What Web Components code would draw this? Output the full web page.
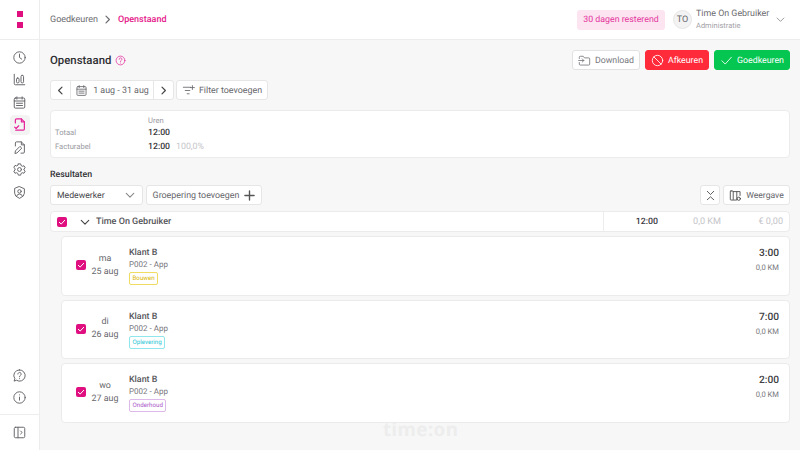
<!DOCTYPE html>
<html lang="nl">
<head>
<meta charset="utf-8">
<title>Openstaand</title>
<style>
  html, body { margin: 0; height: 450px; overflow: hidden; }
  body { font-family: Roboto, "Noto Sans", sans-serif; color: #4b4b50; background: #f7f7f7; text-rendering: geometricPrecision; white-space: nowrap; }
</style>
</head>
<body>
<app-shell>
  <side-nav slot="nav"></side-nav>
  <top-bar slot="top"></top-bar>
  <page-head></page-head>
  <date-bar></date-bar>
  <summary-card></summary-card>
  <results-bar></results-bar>
  <group-row></group-row>
  <entry-card day="ma" date="25 aug" time="3:00" tag="Bouwen" color="#f0dc60" text="#d9b400"></entry-card>
  <entry-card day="di" date="26 aug" time="7:00" tag="Oplevering" color="#8fe6ec" text="#22c5d4"></entry-card>
  <entry-card day="wo" date="27 aug" time="2:00" tag="Onderhoud" color="#dcb9e8" text="#a956c9"></entry-card>
  <div slot="mark">time:on</div>
</app-shell>

<script>
const ICON = 'fill="none" stroke="currentColor" stroke-width="1.3" stroke-linecap="round" stroke-linejoin="round"';

const icons = {
  clock: `<svg width="20" height="20" viewBox="0 0 20 20" ${ICON}><circle cx="10" cy="10" r="7.6"/><path d="M10 5.5V10l3 2.2"/></svg>`,
  chart: `<svg width="20" height="20" viewBox="0 0 20 20" ${ICON}><path d="M3 3v12.5q0 1.500 1.500 1.500H17"/><rect x="6" y="8" width="3.400" height="6.500" rx="1.500"/><rect x="12" y="4.500" width="3.400" height="10" rx="1.500"/></svg>`,
  calendar: `<svg width="20" height="20" viewBox="0 0 20 20" ${ICON}><rect x="3" y="4" width="14" height="13.500" rx="1.500"/><path d="M3 8h14M6.500 2.500v3M13.500 2.500v3M6 11h8M6 14h8"/></svg>`,
  approve: `<svg width="20" height="20" viewBox="0 0 20 20" fill="none" stroke="currentColor" stroke-width="1.600" stroke-linecap="round" stroke-linejoin="round"><path d="M4.500 8V4q0-1.500 1.500-1.500h6.500L16.500 6.500V16q0 1.500-1.500 1.500H5"/><path d="M12.500 2.500v4h4"/><path d="M3.500 13.500l2 1.800 3.500-3.600"/></svg>`,
  edit: `<svg width="20" height="20" viewBox="0 0 20 20" ${ICON}><path d="M4.500 8V4q0-1.500 1.500-1.500h6.500L16.500 6.500V16q0 1.500-1.500 1.500h-3"/><path d="M12.500 2.500v4h4"/><path d="M4 17.500l.6-3 6-6 2.400 2.400-6 6z"/></svg>`,
  gear: `<svg width="20" height="20" viewBox="0 0 20 20" ${ICON}><path d="M8.400 2.500h3.200l.5 2.200 1.700 1 2.200-.7 1.600 2.800-1.700 1.500v1.400l1.700 1.500-1.600 2.800-2.200-.7-1.700 1-.5 2.200H8.400l-.5-2.200-1.700-1-2.200.7-1.600-2.800 1.700-1.500V8.800L2.400 7.300 4 4.500l2.200.7 1.700-1z"/><circle cx="10" cy="10" r="2.600"/></svg>`,
  shield: `<svg width="20" height="20" viewBox="0 0 20 20" ${ICON}><path d="M10 2.200l6.500 2.800v6q0 4.300-6.500 6.800-6.500-2.500-6.500-6.800V5z"/><circle cx="10" cy="8.500" r="2.300"/><path d="M6 15q.8-3 4-3t4 3"/></svg>`,
  help: `<svg width="20" height="20" viewBox="0 0 20 20" ${ICON}><path d="M10 2.500a7.500 7.500 0 1 1-4 13.800L2.800 17.500l1-3.200A7.500 7.500 0 0 1 10 2.500z"/><path d="M7.800 8a2.200 2.200 0 1 1 3.400 1.900c-.8.500-1.200 1-1.200 1.800"/><path d="M10 14.200v.1"/></svg>`,
  info: `<svg width="20" height="20" viewBox="0 0 20 20" ${ICON}><circle cx="10" cy="10" r="7.600"/><path d="M10 9.500v4M10 6.500v.1"/></svg>`,
  panel: `<svg width="20" height="20" viewBox="0 0 20 20" ${ICON}><rect x="3" y="3" width="14" height="14" rx="1.800"/><path d="M8 3v14M11.500 8l2 2-2 2"/></svg>`,
  down: `<svg width="12" height="12" viewBox="0 0 12 12" ${ICON}><path d="M1.500 4l4.500 4.500L10.500 4"/></svg>`,
  left: `<svg width="12" height="12" viewBox="0 0 12 12" fill="none" stroke="currentColor" stroke-width="1.600" stroke-linecap="round" stroke-linejoin="round"><path d="M8 1.500L3.500 6 8 10.500"/></svg>`,
  right: `<svg width="12" height="12" viewBox="0 0 12 12" fill="none" stroke="currentColor" stroke-width="1.600" stroke-linecap="round" stroke-linejoin="round"><path d="M4 1.500L8.500 6 4 10.500"/></svg>`,
  check: `<svg width="11" height="11" viewBox="0 0 12 12" fill="none" stroke="#fff" stroke-width="1.500" stroke-linecap="round" stroke-linejoin="round"><path d="M2 6.500l2.800 2.600L10 3.500"/></svg>`
};

// all plain elements share this: template string goes in the shadow root
class BaseEl extends HTMLElement {
  constructor() {
    super();
    this.attachShadow({ mode: "open" });
  }
  connectedCallback() {
    this.shadowRoot.innerHTML = `<style>${this.css()}</style>${this.html()}`;
  }
  css() { return ""; }
  html() { return ""; }
}

class AppShell extends BaseEl {
  css() { return `
    :host { display: grid; grid-template-columns: 40px 1fr; grid-template-rows: 40px 1fr; width: 800px; height: 450px; position: relative; overflow: hidden; }
    ::slotted([slot=nav]) { grid-row: 1 / 3; }
    main { padding: 10px 10px 0 10px; display: flex; flex-direction: column; min-width: 0; }
    .wm { position: absolute; left: 383px; top: 416px; font: 700 18.800px "Noto Sans", sans-serif; letter-spacing: .4px; color: #ededed; }
  `; }
  html() { return `<slot name="nav"></slot><slot name="top"></slot>
    <main><slot></slot></main>
    <div class="wm"><slot name="mark"></slot></div>`; }
}

class SideNav extends BaseEl {
  css() { return `
    :host { display: flex; flex-direction: column; background: #fff; border-right: 1px solid #ededed; box-sizing: border-box; width: 40px; color: #66666b; }
    .logo { height: 40px; box-sizing: border-box; border-bottom: 1px solid #ededed; display: flex; flex-direction: column; align-items: center; justify-content: center; gap: 5px; flex: none; }
    .logo i { width: 6px; height: 6px; background: #df0f80; display: block; }
    .list { display: flex; flex-direction: column; align-items: center; gap: 2.500px; padding-top: 7px; flex: 1; }
    .it { width: 20px; height: 20px; padding: 0; display: flex; align-items: center; justify-content: center; border-radius: 4px; }
    .it svg { width: 15px; height: 15px; flex: none; }
    .on { background: #f3f3f3; color: #e5249a; width: 20px; }
    .sp { flex: 1; }
    .foot { height: 35px; flex: none; border-top: 1px solid #ededed; display: flex; align-items: center; justify-content: center; }
    .foot svg { width: 15px; height: 15px; }
    .low { padding-bottom: 4px; }
  `; }
  html() {
    const it = (n, c = "") => `<span class="it ${c}">${icons[n]}</span>`;
    return `<div class="logo"><i></i><i></i></div>
    <div class="list">${it("clock")}${it("chart")}${it("calendar")}${it("approve", "on")}${it("edit")}${it("gear")}${it("shield")}
      <span class="sp"></span>${it("help")}${it("info")}<span class="low"></span></div>
    <div class="foot">${icons.panel}</div>`;
  }
}

class TopBar extends BaseEl {
  css() { return `
    :host { display: flex; align-items: center; background: #fff; border-bottom: 1px solid #ededed; box-sizing: border-box; height: 40px; padding: 0 15px 0 10px; font-size: 9px; }
    .crumb { color: #6b6b70; padding-top: 1px; }
    .sep { margin: 0 6px 0 5px; display: flex; color: #6b6b70; }
    .sep svg { width: 9px; height: 9px; }
    .cur { color: #e5188a; font-weight: 500; font-size: 9px; padding-top: 1px; }
    .sp { flex: 1; }
    .days { background: #fce4f1; color: #e5359d; border-radius: 3px; height: 20px; line-height: 20px; font-size: 8.800px; width: 88px; text-align: center; margin-right: 8px; }
    .av { width: 19px; height: 19px; border-radius: 50%; background: #f3f3f3; border: 1px solid #e6e6e6; display: flex; align-items: center; justify-content: center; color: #66666b; font-size: 9px; margin-right: 4px; box-sizing: border-box; }
    .who { line-height: 11px; width: 80px; }
    .n { color: #6b6b70; font-size: 8.900px; }
    .r { color: #a3a3a8; font-size: 7.500px; }
    .ch { color: #999; display: flex; }
    .ch svg { width: 9px; height: 9px; }
  `; }
  html() { return `<span class="crumb">Goedkeuren</span><span class="sep">${icons.right}</span><span class="cur">Openstaand</span><span class="sp"></span>
    <span class="days">30 dagen resterend</span><span class="av">TO</span>
    <span class="who"><div class="n">Time On Gebruiker</div><div class="r">Administratie</div></span><span class="ch">${icons.down}</span>`; }
}

class PageHead extends BaseEl {
  css() { return `
    :host { display: flex; align-items: center; height: 20px; font-size: 8.800px; }
    h1 { margin: 0 4px 0 0; font-size: 11.400px; font-weight: 500; color: #2f2f33; }
    .q { color: #e5249a; display: flex; }
    .q svg { width: 11px; height: 11px; }
    .sp { flex: 1; }
    button { font: inherit; height: 20px; border-radius: 3px; border: 1px solid; display: flex; align-items: center; padding: 0; margin-left: 5px; justify-content: center; gap: 4px; box-sizing: border-box; text-rendering: inherit; }
    button span { padding-top: 1px; }
    .dl { width: 68px; background: #fff; border-color: #e2e2e2; color: #77777c; }
    .no { width: 64px; background: #ff2a3a; border-color: #ff2a3a; color: #fff; }
    .ok { width: 76px; background: #04c651; border-color: #04c651; color: #fff; }
    button svg { width: 13px; height: 13px; }
  `; }
  html() { return `<h1>Openstaand</h1><span class="q"><svg viewBox="0 0 20 20" ${ICON} stroke-width="1.800"><circle cx="10" cy="10" r="8"/><path d="M7.500 7.800a2.500 2.500 0 1 1 3.700 2.200c-.8.500-1.200 1-1.200 1.800M10 14.600v.1"/></svg></span><span class="sp"></span>
    <button class="dl"><svg viewBox="0 0 20 20" ${ICON}><path d="M2 7V5q0-1.500 1.500-1.500H8l2 2.500h6.500Q18 6 18 7.500v8q0 1.500-1.500 1.500h-13Q2 17 2 15.500V13"/><path d="M1 10h8M6.500 7.500L9 10l-2.500 2.500"/></svg><span>Download</span></button>
    <button class="no"><svg viewBox="0 0 20 20" ${ICON}><circle cx="10" cy="10" r="8"/><path d="M4.300 4.300l11.400 11.400"/></svg><span>Afkeuren</span></button>
    <button class="ok"><svg viewBox="0 0 20 20" ${ICON} stroke-width="1.600"><path d="M3 10.500l5 5L17.500 5"/></svg><span>Goedkeuren</span></button>`; }
}

class DateBar extends BaseEl {
  css() { return `
    :host { display: flex; margin-top: 10px; gap: 2px; font-size: 8.900px; color: #66666b; }
    .g, .f { height: 20px; background: #fff; border: 1px solid #e6e6e6; border-radius: 3px; box-sizing: border-box; display: flex; align-items: center; }
    .g { width: 124px; }
    .a { width: 19px; display: flex; justify-content: center; color: #444; flex: none; }
    .a svg { width: 9px; height: 9px; }
    .m { flex: 1; border-left: 1px solid #e6e6e6; border-right: 1px solid #e6e6e6; height: 100%; display: flex; align-items: center; justify-content: center; gap: 5px; }
    .m svg, .f svg { width: 13px; height: 13px; }
    .f { width: 92px; justify-content: center; gap: 4px; }
    .t { padding-top: 1px; }
  `; }
  html() { return `<div class="g"><span class="a">${icons.left}</span><span class="m">${icons.calendar}<span class="t">1 aug - 31 aug</span></span><span class="a">${icons.right}</span></div>
    <div class="f"><svg viewBox="0 0 20 20" ${ICON}><path d="M2 5h11M5 10h7M8 15h3M16 2.500v6M13 5.500h6"/></svg><span class="t">Filter toevoegen</span></div>`; }
}

class SummaryCard extends BaseEl {
  css() { return `
    :host { display: grid; grid-template-columns: 93px 28px auto 1fr; grid-template-rows: 11px 13px 15px; align-items: center; margin-top: 10px; height: 48px; box-sizing: border-box; padding: 4px 4px; background: #fff; border: 1px solid #ebebeb; border-radius: 4px; font-size: 7.600px; color: #9a9a9f; }
    .v { font-size: 8.700px; color: #38383c; font-weight: 500; }
    .p { font-size: 8.800px; color: #c6c6ca; }
    .h { font-size: 7.600px; grid-column: 2 / 5; }
  `; }
  html() { return `<span></span><span class="h">Uren</span>
    <span>Totaal</span><span class="v">12:00</span><span></span><span></span>
    <span>Facturabel</span><span class="v">12:00</span><span class="p">100,0%</span><span></span>`; }
}

class ResultsBar extends BaseEl {
  css() { return `
    :host { display: block; margin-top: 10px; font-size: 8.900px; color: #66666b; }
    h2 { margin: 0; font-size: 8.800px; font-weight: 500; color: #2f2f33; line-height: 13px; padding-top: 1px; }
    .r { display: flex; gap: 3px; margin-top: 3px; }
    .b { height: 20px; background: #fff; border: 1px solid #e6e6e6; border-radius: 3px; box-sizing: border-box; display: flex; align-items: center; }
    .b span { padding-top: 1px; }
    .sel { width: 93px; justify-content: space-between; padding: 0 7px 0 6px; color: #46464a; font-size: 8.700px; }
    .sel svg { width: 10px; height: 10px; color: #888; }
    .add { width: 116px; justify-content: center; gap: 5px; }
    .add svg { width: 11px; height: 11px; color: #555; }
    .sp { flex: 1; }
    .x { width: 20px; justify-content: center; color: #444; }
    .x svg { width: 13px; height: 13px; }
    .w { width: 67px; justify-content: center; gap: 4px; font-size: 8.600px; }
    .w svg { width: 13px; height: 13px; color: #444; }
  `; }
  html() { return `<h2>Resultaten</h2><div class="r">
    <div class="b sel"><span>Medewerker</span>${icons.down}</div>
    <div class="b add"><span>Groepering toevoegen</span><svg viewBox="0 0 12 12" fill="none" stroke="currentColor" stroke-width="1.500" stroke-linecap="round"><path d="M6 1v10M1 6h10"/></svg></div>
    <span class="sp"></span>
    <div class="b x"><svg viewBox="0 0 20 20" ${ICON} stroke-width="1.600"><path d="M5 3.500l5 5 5-5M5 16.500l5-4.500 5 4.500"/></svg></div>
    <div class="b w"><svg viewBox="0 0 20 20" ${ICON}><rect x="2" y="3" width="4.500" height="14" rx="1"/><path d="M6.500 4h5.500v13H6.500M12 4h5v6"/><circle cx="15" cy="15" r="2.500"/></svg><span>Weergave</span></div>
  </div>`; }
}

class CheckBox extends BaseEl {
  css() { return `
    :host { display: flex; align-items: center; justify-content: center; width: 10px; height: 10px; background: #df0f80; border-radius: 2px; flex: none; }
    svg { width: 8px; height: 8px; }
  `; }
  html() { return icons.check; }
}

class GroupRow extends BaseEl {
  css() { return `
    :host { display: flex; align-items: center; margin-top: 6px; height: 21px; background: #fff; border: 1px solid #ebebeb; border-radius: 4px; box-sizing: border-box; font-size: 9px; color: #55555a; padding-left: 6px; }
    .c { display: flex; margin-left: 13px; margin-right: 6px; color: #444; }
    .c svg { width: 10px; height: 10px; }
    .n { flex: 1; font-weight: 500; }
    .t { border-left: 1px solid #ededed; width: 186px; height: 100%; box-sizing: border-box; display: flex; align-items: center; }
    .a { width: 54px; text-align: right; color: #3a3a3e; font-size: 8.800px; font-weight: 500; }
    .b { width: 63px; text-align: right; color: #c4c4c8; font-size: 9.100px; }
    .d { width: 62px; text-align: right; color: #c4c4c8; font-size: 9.100px; }
  `; }
  html() { return `<check-box></check-box><span class="c">${icons.down}</span><span class="n">Time On Gebruiker</span>
    <span class="t"><span class="a">12:00</span><span class="b">0,0 KM</span><span class="d">€ 0,00</span></span>`; }
}

class EntryCard extends BaseEl {
  css() {
    const c = this.getAttribute("color"), t = this.getAttribute("text");
    return `
    :host { display: flex; align-items: center; margin: 4px 0 0 11px; height: 59.500px; background: #fff; border: 1px solid #ebebeb; border-radius: 4px; box-sizing: border-box; padding: 0 10px 0 14px; }
    check-box { margin-top: -1px; }
    .d { width: 38px; text-align: center; font-size: 8.900px; line-height: 13px; color: #66666b; flex: none; box-sizing: border-box; }
    .m { flex: 1; margin-left: 5px; padding-top: 2px; }
    .k { font-size: 8.900px; font-weight: 500; color: #55555a; line-height: 11px; }
    .p { font-size: 8px; color: #77777c; line-height: 11px; }
    .tag { display: block; width: fit-content; margin-top: 2px; font-size: 6.200px; line-height: 11px; padding: 0 2.500px; border: 1px solid ${c}; color: ${t}; border-radius: 2px; }
    .r { text-align: right; align-self: flex-start; padding-top: 10px; }
    .h { font-size: 10.200px; font-weight: 500; color: #404044; line-height: 14px; }
    .km { font-size: 7.600px; color: #77777c; line-height: 11px; margin-top: 1px; }
  `; }
  html() { const a = (n) => this.getAttribute(n); return `<check-box></check-box>
    <div class="d">${a("day")}<br>${a("date")}</div>
    <div class="m"><div class="k">Klant B</div><div class="p">P002 - App</div><span class="tag">${a("tag")}</span></div>
    <div class="r"><div class="h">${a("time")}</div><div class="km">0,0 KM</div></div>`; }
}

customElements.define("app-shell", AppShell);
customElements.define("side-nav", SideNav);
customElements.define("top-bar", TopBar);
customElements.define("page-head", PageHead);
customElements.define("date-bar", DateBar);
customElements.define("summary-card", SummaryCard);
customElements.define("results-bar", ResultsBar);
customElements.define("check-box", CheckBox);
customElements.define("group-row", GroupRow);
customElements.define("entry-card", EntryCard);
</script>
</body>
</html>
